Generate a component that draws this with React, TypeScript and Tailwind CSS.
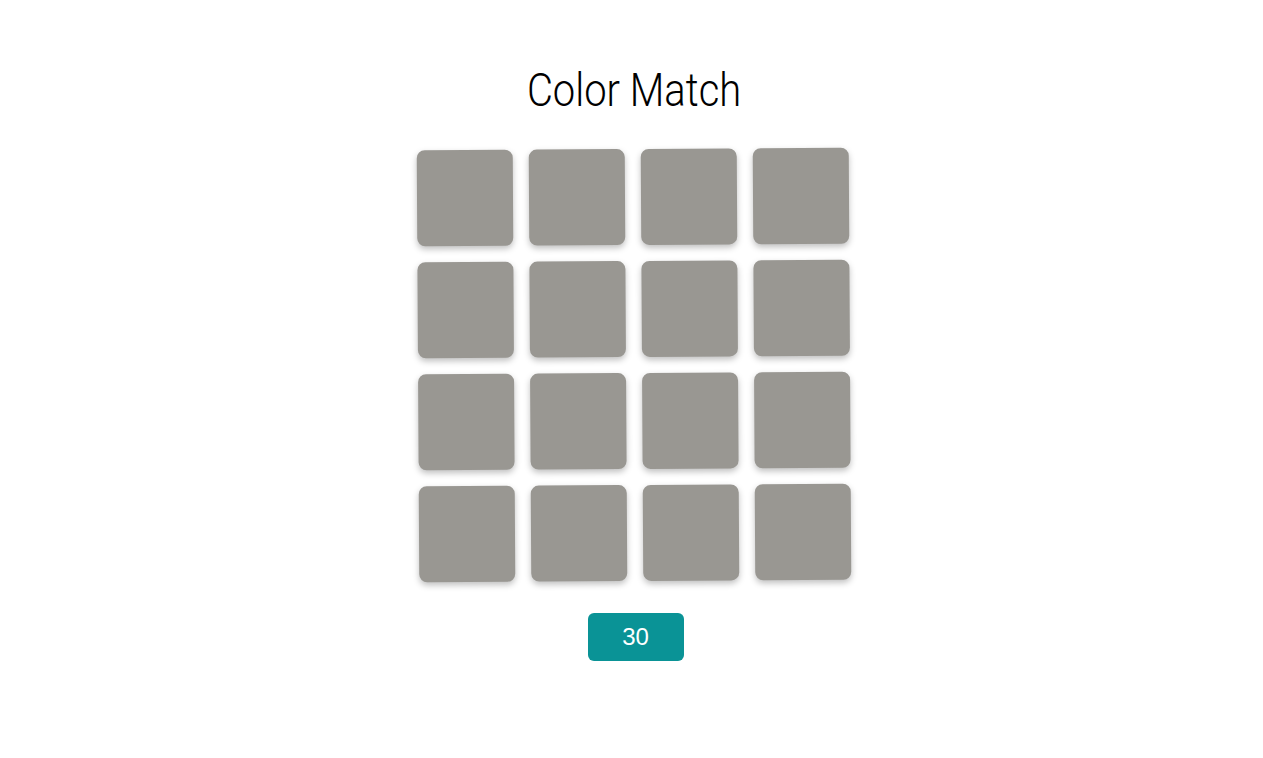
import React from 'react';

const tiles = Array.from({ length: 16 }, (_, i) => i);

export default function App() {
  return (
    <div className="min-h-screen bg-white flex flex-col items-center pt-[58px] pl-[5px]">
      <h1 className="text-[47px] leading-[64px] text-black font-light font-['Roboto',sans-serif] inline-block scale-x-[0.85]">
        Color Match
      </h1>
      <div className="mt-[27px] grid grid-cols-4 gap-4 rotate-[-0.34deg]">
        {tiles.map((t) => (
          <div
            key={t}
            className="w-24 h-24 rounded-lg bg-[#999792] shadow-[0_3px_6px_rgba(0,0,0,0.25)]"
          />
        ))}
      </div>
      <button className="mt-[32px] ml-[3px] w-24 h-12 rounded-md bg-[#0a9396] text-white text-2xl font-['Liberation_Sans',sans-serif]">
        30
      </button>
    </div>
  );
}
